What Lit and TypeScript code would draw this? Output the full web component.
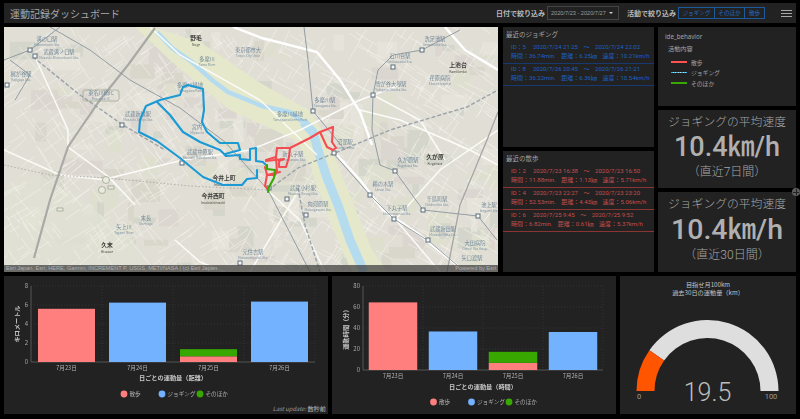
import { LitElement, html, css, svg } from 'lit';
import { customElement, property } from 'lit/decorators.js';

type Pt = [number, number];
const line = (pts: Pt[]) => pts.map((p) => p.join(',')).join(' ');

// small seeded generator, the street texture has to stay the same between runs
function rng(seed: number) {
  return () => {
    seed = (seed + 0x6d2b79f5) | 0;
    let t = Math.imul(seed ^ (seed >>> 15), 1 | seed);
    t = (t + Math.imul(t ^ (t >>> 7), 61 | t)) ^ t;
    return ((t ^ (t >>> 14)) >>> 0) / 4294967296;
  };
}

function streets(): string {
  const r = rng(42);
  let d = '';
  for (let i = 0; i < 820; i++) {
    const x = 4 + r() * 494;
    const y = 27 + r() * 245;
    const a = (x > 250 ? 0.55 : 0.95) + (r() > 0.5 ? Math.PI / 2 : 0) + (r() - 0.5) * 0.25;
    const l = 8 + r() * 24;
    d += `M${x.toFixed(1)} ${y.toFixed(1)}L${(x + Math.cos(a) * l).toFixed(1)} ${(y + Math.sin(a) * l).toFixed(1)}`;
  }
  return d;
}

function blotches() {
  const r = rng(7);
  const out: { x: number; y: number; w: number; h: number; c: string }[] = [];
  const cols = ['#d9d6cc', '#e6e3da', '#d4d5cb', '#dfdfcf', '#dcd6d0'];
  for (let i = 0; i < 170; i++) {
    out.push({
      x: 4 + r() * 490,
      y: 27 + r() * 240,
      w: 6 + r() * 24,
      h: 5 + r() * 18,
      c: cols[Math.floor(r() * cols.length)],
    });
  }
  return out;
}

const STATIONS: Pt[] = [
  [30, 50], [35, 56], [7, 85], [122, 125], [182, 163], [240, 263], [287, 199], [269, 188],
  [306, 215], [313, 111], [334, 153], [373, 95], [393, 67], [422, 50], [395, 171], [370, 195],
  [423, 210], [478, 216], [394, 219], [428, 240],
];

// name, romaji, x, y
const LABELS: [string, string, number, number][] = [
  ['溝の口駅', 'Mizonokuchi Sta.', 47, 39],
  ['武蔵溝ノ口駅', 'Musashi-Mizonokuchi Sta.', 59, 52],
  ['梶が谷駅', 'Kajigaya Sta.', 21, 74],
  ['武蔵新城駅', 'Musashi Shinjo Sta.', 138, 114],
  ['東京都市大', 'Tokyo City Univ.', 248, 50],
  ['多摩川', 'Tama River', 207, 59],
  ['多摩川緑地', 'Tamagawa Park', 190, 85],
  ['多摩川駅', 'Tamagawa Sta.', 325, 100],
  ['多摩川緑地', 'Tamagawa Green Park', 290, 114],
  ['宮内', 'Miyauchi', 197, 127],
  ['沼部駅', 'Numabe Sta.', 345, 142],
  ['石川台駅', 'Ishikawadai Sta.', 400, 56],
  ['雪が谷大塚駅', 'Yukigaya Otsuka Sta.', 391, 84],
  ['洗足池駅', 'Senzokuike Sta.', 435, 39],
  ['荏原病院', 'Ebara Hospital', 440, 78],
  ['鵜の木駅', 'Unoki Sta.', 383, 184],
  ['久が原駅', 'Kugahara Sta.', 408, 160],
  ['千鳥町駅', 'Chidoricho Sta.', 437, 199],
  ['池上駅', 'Ikegami Sta.', 489, 205],
  ['下丸子駅', 'Shimomaruko Sta.', 397, 208],
  ['武蔵新田駅', 'Musashi Nitta Sta.', 443, 229],
  ['大田病院', 'Omori Ota Hosp.', 475, 243],
  ['矢口渡駅', '', 472, 258],
  ['向河原駅', 'Mukaigawara Sta.', 318, 204],
  ['武蔵小杉駅', 'Musashi Kosugi Sta.', 303, 188],
  ['新丸子駅', 'Shinmaruko Sta.', 293, 154],
  ['元住吉駅', 'Motosumiyoshi Sta.', 253, 252],
  ['武蔵中原駅', 'Musashi Nakahara Sta.', 200, 152],
  ['末長', 'Suenaga', 146, 218],
  ['矢上川', 'Yagami River', 124, 227],
];

const PLACES: [string, string, number, number][] = [
  ['野毛', 'Noge', 196, 38],
  ['上池台', 'Kamiikedai', 458, 65],
  ['久が原', 'Kugahara', 435, 157],
  ['今井上町', 'Imaikamicho', 224, 178],
  ['今井西町', 'Imainishimachi', 213, 196],
  ['久末', 'Hisasue', 107, 245],
];

const BLUE_ROUTES: Pt[][] = [
  [[183, 87], [188, 85], [203, 89], [204, 110], [202, 122], [207, 132], [220, 143], [238, 143], [240, 150], [225, 154], [226, 156], [240, 155], [240, 159], [250, 160], [250, 149], [256, 148], [256, 161], [263, 162], [266, 165]],
  [[183, 87], [180, 95], [160, 100], [146, 106], [140, 120], [139, 132], [157, 141], [180, 158], [203, 177], [223, 185], [242, 185], [247, 179], [257, 178], [257, 170]],
  [[157, 102], [170, 115], [183, 132], [200, 142], [220, 150], [226, 156]],
];

const RED_ROUTES: Pt[][] = [
  [[333, 127], [320, 132], [310, 138], [290, 148], [277, 148], [276, 157], [266, 160]],
  [[320, 132], [327, 147], [333, 150], [336, 148], [332, 142], [333, 127]],
  [[290, 148], [289, 157], [286, 167], [279, 167], [279, 161], [284, 159], [266, 161]],
  [[276, 157], [277, 172], [275, 175], [267, 175], [265, 186], [268, 189]],
  [[265, 167], [267, 175], [280, 172]],
];

const GREEN_ROUTE: Pt[] = [[267, 165], [267, 169], [275, 170], [274, 178], [269, 187], [268, 192]];

@customElement('route-map')
class RouteMap extends LitElement {
  static styles = css`
    :host {
      display: block;
      position: relative;
      overflow: hidden;
      background: #e1ded5;
    }
    svg {
      display: block;
      width: 100%;
      height: 100%;
      filter: blur(0.3px);
      font-family: 'Noto Sans CJK JP', sans-serif;
    }
    .street { stroke: #f6f5f0; stroke-width: 0.6; fill: none; opacity: 0.9; }
    .main { stroke: #fbfbf8; stroke-width: 1.5; fill: none; }
    .wide { stroke: #ffffff; stroke-width: 2.4; fill: none; }
    .highway { stroke: #a9a9a6; stroke-width: 2.2; fill: none; }
    .expr { stroke: #a5a5a4; stroke-width: 1.3; fill: none; }
    .rail { stroke: #8a959c; stroke-width: 0.9; fill: none; }
    .dash { stroke: #9aa3a8; stroke-width: 1.4; stroke-dasharray: 4 2; fill: none; }
    .dot { stroke: #979c90; stroke-width: 0.7; stroke-dasharray: 1.5 2; fill: none; }
    .route { fill: none; stroke-width: 2.1; stroke-linejoin: round; stroke-linecap: round; }
    .st { fill: #f4f6f7; stroke: #5e6e7a; stroke-width: 1; }
    .ja { font-size: 5.2px; fill: #6f8799; text-anchor: middle; }
    .en { font-size: 3.3px; fill: #7d93a3; text-anchor: middle; }
    .pja { font-size: 5.8px; font-weight: 700; fill: #3c3c38; text-anchor: middle; }
    .pen { font-size: 3.4px; fill: #4a4a46; text-anchor: middle; }
    .ic { fill: #e9ebdc; stroke: #88917f; stroke-width: 0.6; }
    .attr {
      position: absolute;
      left: 0;
      right: 0;
      bottom: 0;
      height: 7px;
      padding: 0 2px;
      display: flex;
      justify-content: space-between;
      align-items: center;
      background: rgba(60, 60, 60, 0.72);
      color: #aeaeae;
      font: 5.6px/7px 'Liberation Sans', sans-serif;
      white-space: nowrap;
    }
  `;

  render() {
    return html`
      <svg viewBox="4 27 494 245" preserveAspectRatio="none">
        ${blotches().map(
          (b) => svg`<rect x=${b.x} y=${b.y} width=${b.w} height=${b.h} fill=${b.c} />`,
        )}
        <path d="M4 190 L40 175 L80 200 L130 235 L150 272 L4 272 Z" fill="#e0e3d3" opacity="0.7" />
        <path d=${streets()} class="street" />
        <polygon
          fill="#e5e8cb"
          points="135,27 152,27 200,42 262,84 312,112 332,150 350,195 372,250 388,272 352,272 330,222 310,165 296,140 230,110 172,62"
        />
        <polyline
          fill="none"
          stroke="#b5dbef"
          stroke-width="4.5"
          points="157,32 172,48 192,62 212,80 228,92 262,106 290,112 303,122"
        />
        <polyline
          fill="none"
          stroke="#b5dbef"
          stroke-width="9"
          stroke-linejoin="round"
          points="303,122 313,132 318,150 327,178 338,205 350,240 364,272"
        />
        <g>
          <polyline class="wide" points="233,27 262,38 317,52 340,80 360,112 372,145" />
          <polyline class="wide" points="337,155 360,180 383,210 420,235 465,272" />
          <polyline class="wide" points="498,70 465,50 445,27" />
          <polyline class="main" points="35,57 50,90 68,130 68,147 110,178 135,205" />
          <polyline class="main" points="110,178 183,160 250,150 300,130 360,100 400,85" />
          <polyline class="main" points="4,150 60,175 107,180" />
          <polyline class="main" points="175,240 200,262 225,272" />
          <polyline class="main" points="300,188 250,272" />
          <polyline class="main" points="267,190 300,220 325,272" />
          <polyline class="main" points="150,27 180,55 260,100 317,155" />
          <polyline class="main" points="396,220 440,272" />
          <polyline class="main" points="498,130 440,170 395,220" />
          <polyline class="main" points="360,110 400,120 470,150 498,165" />
          <polyline class="main" points="373,95 420,120 445,160" />
        </g>
        <polyline class="highway" points="155,28 128,65 100,100 78,132 68,147 50,200 34,258" />
        <polyline class="expr" points="498,112 487,140 460,205 447,272" />
        <polyline class="rail" points="304,27 308,60 313,111 345,150" />
        <polyline class="rail" points="4,60 30,50 60,27" />
        <polyline class="rail" points="50,27 90,50 130,80 180,108 225,142 268,190 310,272" />
        <polyline class="rail" points="333,153 370,195 394,219 430,242 465,272" />
        <polyline class="rail" points="373,95 378,70 393,55 422,50 460,30" />
        <polyline class="rail" points="373,95 372,130 380,165 395,171 423,210 478,216 497,240" />
        <polyline class="rail" points="10,60 30,75 15,100" />
        <polyline class="dash" points="33,57 80,95 123,125 165,150" />
        <polyline class="dash" points="268,190 298,168 335,153 390,130 467,107 498,90" />
        <polyline class="dash" points="298,188 305,225 320,272" />
        <polyline class="dot" points="4,165 50,175 107,178 190,186 268,190" />
        <rect x="83" y="90" width="36" height="11" rx="2" fill="none" stroke="#8c9a82" stroke-width="0.6" />
        <text class="ja" x="101" y="94.5">東名川崎IC</text>
        <text class="en" x="101" y="99.5">Kawasaki IC</text>
        <circle class="ic" cx="106" cy="180" r="3.5" />
        <circle class="ic" cx="102" cy="190" r="3.5" />
        <rect class="ic" x="108" y="186" width="6" height="3" />
        <rect class="ic" x="57" y="208" width="6" height="3" />
        ${STATIONS.map(
          ([x, y]) => svg`<rect class="st" x=${x - 2} y=${y - 2} width="4" height="4" />`,
        )}
        ${LABELS.map(
          ([ja, en, x, y]) => svg`
            <text class="ja" x=${x} y=${y + 2}>${ja}</text>
            ${en ? svg`<text class="en" x=${x} y=${y + 7}>${en}</text>` : ''}
          `,
        )}
        ${PLACES.map(
          ([ja, en, x, y]) => svg`
            <text class="pja" x=${x} y=${y + 2}>${ja}</text>
            <text class="pen" x=${x} y=${y + 7.5}>${en}</text>
          `,
        )}
        ${BLUE_ROUTES.map(
          (r) => svg`<polyline class="route" stroke="#1c9ad6" points=${line(r)} />`,
        )}
        ${RED_ROUTES.map(
          (r) => svg`<polyline class="route" stroke="#f24d52" points=${line(r)} />`,
        )}
        <polyline class="route" stroke="#38a800" points=${line(GREEN_ROUTE)} />
      </svg>
      <div class="attr">
        <span>Esri Japan, Esri, HERE, Garmin, INCREMENT P, USGS, METI/NASA | (c) Esri Japan</span>
        <span>Powered by Esri</span>
      </div>
    `;
  }
}

interface Segment { value: number; color: string; }
interface Day { label: string; segments: Segment[]; }
interface ChartBox {
  w: number; l: number; r: number; t: number; b: number;
  yTitleX: number; bar: number; titleY: number; legendY: number; legendX: number[];
}

const PINK = '#ff7f7f';
const SKY = '#73b2ff';
const LEAF = '#38a800';

@customElement('bar-chart')
class BarChart extends LitElement {
  @property({ type: Array }) days: Day[] = [];
  @property({ type: Array }) ticks: number[] = [];
  @property() title = '';
  @property() yTitle = '';
  // all in px of the panel
  @property({ type: Object }) box: ChartBox = { w: 300, l: 0, r: 0, t: 0, b: 0, yTitleX: 0, bar: 0, titleY: 0, legendY: 0, legendX: [0, 0, 0] };

  static styles = css`
    :host { display: block; }
    svg {
      display: block;
      width: 100%;
      height: 100%;
      font-family: 'Noto Sans CJK JP', sans-serif;
      filter: blur(0.2px);
    }
    .grid { stroke: #3a3a3a; stroke-width: 0.7; stroke-dasharray: 1.2 1.8; }
    .axis { stroke: #555; stroke-width: 1; }
    .tick { font-size: 6px; fill: #a8a8a8; text-anchor: end; }
    .cat { font-size: 5.6px; fill: #b4b4b4; text-anchor: middle; }
    .ttl { font-size: 6.2px; font-weight: 700; fill: #c8c8c8; text-anchor: middle; }
    .leg { font-size: 5.6px; fill: #b0b0b0; }
  `;

  render() {
    const { w, l, r, t, b, yTitleX, bar, titleY, legendY, legendX } = this.box;
    const max = this.ticks[this.ticks.length - 1];
    const y = (v: number) => b - (v / max) * (b - t);
    const step = (r - l) / this.days.length;
    const legend = [
      { name: '散歩', color: PINK },
      { name: 'ジョギング', color: SKY },
      { name: 'そのほか', color: LEAF },
    ];
    return html`
      <svg viewBox="0 0 ${w} 138">
        ${this.ticks.map(
          (v) => svg`
            <line class=${v === 0 ? 'axis' : 'grid'} x1=${l} x2=${r} y1=${y(v)} y2=${y(v)} />
            <text class="tick" x=${l - 3} y=${y(v) + 2}>${v}</text>
          `,
        )}
        ${this.days.map((_, i) => svg`<line class="grid" x1=${l + step * (i + 1)} x2=${l + step * (i + 1)} y1=${t} y2=${b} />`)}
        <line class="axis" x1=${l} x2=${l} y1=${t} y2=${b} />
        ${this.days.map((d, i) => {
          const cx = l + step * (i + 0.5);
          let base = 0;
          return svg`
            ${d.segments.map((s) => {
              const top = y(base + s.value);
              const h = y(base) - top;
              base += s.value;
              return svg`<rect x=${cx - bar / 2} y=${top} width=${bar} height=${h} fill=${s.color} />`;
            })}
            <text class="cat" x=${cx} y=${b + 8}>${d.label}</text>
          `;
        })}
        <text class="ttl" x=${(l + r) / 2} y=${titleY}>${this.title}</text>
        <text
          class="ttl"
          transform="translate(${yTitleX} ${(t + b) / 2}) rotate(-90)"
          x="0"
          y="0"
        >${this.yTitle}</text>
        ${legend.map(
          (e, i) => svg`
            <circle cx=${legendX[i]} cy=${legendY} r="3.4" fill=${e.color} />
            <text class="leg" x=${legendX[i] + 5.5} y=${legendY + 2}>${e.name}</text>
          `,
        )}
      </svg>
    `;
  }
}

@customElement('goal-gauge')
class GoalGauge extends LitElement {
  @property({ type: Number }) value = 0;
  @property({ type: Number }) max = 100;

  static styles = css`
    :host { display: block; text-align: center; color: #c4c4c4; position: relative; }
    .head {
      padding-top: 5px;
      font: 6.2px/8px 'Noto Sans CJK JP', sans-serif;
      color: #c4c4c4;
    }
    svg { display: block; position: absolute; left: 0; top: 0; width: 100%; height: 100%; font-family: Roboto, sans-serif; }
    .val { font-size: 25px; font-weight: 300; fill: #bdbdbd; text-anchor: middle; }
    .end { font-size: 7.5px; fill: #9c9c9c; text-anchor: middle; }
  `;

  private arc(cx: number, cy: number, ro: number, ri: number, from: number, to: number) {
    const p = (r: number, f: number) => {
      const a = Math.PI * (1 - f);
      return `${(cx + r * Math.cos(a)).toFixed(2)} ${(cy - r * Math.sin(a)).toFixed(2)}`;
    };
    return `M${p(ro, from)}A${ro} ${ro} 0 0 1 ${p(ro, to)}L${p(ri, to)}A${ri} ${ri} 0 0 0 ${p(ri, from)}Z`;
  }

  render() {
    const f = this.value / this.max;
    const cx = 87.5;
    const cy = 115;
    return html`
      <svg viewBox="0 0 176 138">
        <path d=${this.arc(cx, cy, 71, 53, f, 1)} fill="#dedede" />
        <path d=${this.arc(cx, cy, 71, 53, 0, f)} fill="#ff5500" />
        <text class="val" x=${cx} y="125">${this.value}</text>
        <text class="end" x="19" y="123">0</text>
        <text class="end" x="151" y="123">${this.max}</text>
      </svg>
      <div class="head">目指せ月100km<br />過去30日の運動量（km）</div>
    `;
  }
}

interface Activity { id: number; start: string; end: string; time: string; dist: string; speed: string; }

const JOGS: Activity[] = [
  { id: 5, start: '2020/7/24 21:25', end: '2020/7/24 22:02', time: '36.74', dist: '6.25', speed: '10.21' },
  { id: 8, start: '2020/7/26 20:45', end: '2020/7/26 21:21', time: '36.22', dist: '6.36', speed: '10.54' },
];
const WALKS: Activity[] = [
  { id: 2, start: '2020/7/23 16:38', end: '2020/7/23 16:50', time: '11.88', dist: '1.13', speed: '5.71' },
  { id: 4, start: '2020/7/23 22:27', end: '2020/7/23 23:20', time: '52.53', dist: '4.43', speed: '5.06' },
  { id: 6, start: '2020/7/25 9:45', end: '2020/7/25 9:52', time: '6.82', dist: '0.61', speed: '5.37' },
];

const CHART_DAYS = ['7月23日', '7月24日', '7月25日', '7月26日'];

@customElement('app-root')
export class AppRoot extends LitElement {
  static styles = css`
    :host {
      display: block;
      width: 800px;
      height: 419px;
      box-sizing: border-box;
      padding: 3px 4px 5px;
      background: #000;
      font-family: 'Noto Sans CJK JP', 'Noto Sans', sans-serif;
      overflow: hidden;
      position: relative;
    }
    .page {
      display: grid;
      grid-template-rows: 20px 245px 138px;
      row-gap: 4px;
    }
    .panel { background: #222; min-width: 0; }
    .topbar {
      background: #222;
      display: flex;
      align-items: center;
      padding: 0 4px 0 6px;
      color: #c6c6c6;
    }
    .brand { font-size: 10px; color: #a9a9a9; margin-right: auto; }
    .flabel { font-size: 7px; font-weight: 700; color: #bcbcbc; white-space: nowrap; }
    .date {
      box-sizing: border-box;
      width: 72px;
      height: 14px;
      margin: 0 8px 0 2px;
      border: 1px solid #444;
      padding-left: 3px;
      display: flex;
      align-items: center;
      gap: 3px;
      font: 5.6px 'Liberation Sans', sans-serif;
      color: #9d9d9d;
      white-space: nowrap;
    }
    .caret {
      width: 0;
      height: 0;
      border-left: 2.5px solid transparent;
      border-right: 2.5px solid transparent;
      border-top: 2.5px solid #cfcfcf;
    }
    .seg { display: flex; margin-left: 3px; margin-right: 16px; }
    .seg span {
      box-sizing: border-box;
      height: 12px;
      border: 1px solid #1c5a9e;
      margin-left: -1px;
      color: #2268c0;
      font-size: 5.6px;
      line-height: 10px;
      white-space: nowrap;
      text-align: center;
    }
    .seg .w36 { width: 37px; }
    .seg .w30 { width: 31px; }
    .seg .w20 { width: 21px; }
    .burger { display: flex; flex-direction: column; gap: 2px; width: 11px; }
    .burger i { display: block; height: 1px; background: #a8a8a8; }
    .mid {
      display: grid;
      grid-template-columns: 494px 152px 138px;
      column-gap: 4px;
    }
    .stack { display: grid; row-gap: 4px; min-height: 0; }
    .lists { grid-template-rows: 120px 121px; margin-left: 1px; }
    .side { grid-template-rows: 79px 78px 80px; position: relative; }
    .list-title { font-size: 6.5px; color: #a6a6a6; padding: 3px 0 0 3px; line-height: 9px; }
    .list {
      padding-top: 4px;
      font-family: Roboto, 'Noto Sans CJK JP', sans-serif;
      font-size: 6px;
      line-height: 8.5px;
      white-space: nowrap;
    }
    .row { padding: 0 0 2.5px 8px; margin-bottom: 1.5px; border-bottom: 1px solid; }
    .row div { display: flex; gap: 5.5px; }
    .row .id { width: 16.5px; }
    .jog { color: #1c60c4; }
    .jog .row { border-color: #17396f; }
    .walk { color: #c24f4f; }
    .walk .row { border-color: #8a3434; }
    .legend { padding: 6px 0 0 7px; font-size: 6.2px; color: #a4a4a4; }
    .legend .lid { font-family: 'Noto Sans', sans-serif; line-height: 8px; }
    .legend .lhead { margin: 4px 0 5px 3px; line-height: 8px; }
    .legend ul { list-style: none; margin: 0; padding: 0 0 0 6px; display: grid; row-gap: 2.6px; font-size: 5.8px; }
    .legend li { display: flex; align-items: center; gap: 4px; height: 8px; }
    .swatch { display: block; width: 16px; height: 1.5px; }
    .swatch.walk-line { background: #ff5050; }
    .swatch.jog-line {
      background: repeating-linear-gradient(90deg, #35a8e0 0 1.5px, #bfe4f7 1.5px 2.5px);
    }
    .swatch.other-line { background: #38a800; }
    .stat {
      display: flex;
      flex-direction: column;
      align-items: center;
      color: #a6a6a6;
      white-space: nowrap;
      font-family: Roboto, 'Noto Sans CJK JP', sans-serif;
    }
    .stat .t { font-size: 11.8px; font-weight: 300; line-height: 16px; margin-top: 4px; }
    .stat .v { font-size: 28.5px; font-weight: 500; line-height: 32px; margin-top: 2px; color: #b0b0b0; }
    .stat .s { font-size: 12px; font-weight: 300; line-height: 16px; margin-top: 1px; }
    .stat.first .v { font-size: 27px; line-height: 30px; }
    .stat.first .s { margin-top: 2px; }
    .grip {
      position: absolute;
      right: -4px;
      top: 161px;
      width: 8px;
      height: 8px;
      border-radius: 50%;
      background: #5d5d5d;
    }
    .grip::before,
    .grip::after { content: ''; position: absolute; background: #222; }
    .grip::before { left: 3.5px; top: 1px; width: 1px; height: 6px; }
    .grip::after { left: 1px; top: 3.5px; width: 6px; height: 1px; }
    .bottom {
      display: grid;
      grid-template-columns: 324px 284px 176px;
      column-gap: 4px;
      height: 138px;
    }
    .chart { position: relative; }
    bar-chart, goal-gauge { width: 100%; height: 138px; }
    .updated {
      position: absolute;
      right: 2px;
      bottom: 1px;
      font-size: 5.8px;
      line-height: 8px;
      font-style: italic;
      color: #9a9a9a;
    }
    .updated b { font-style: normal; font-weight: 400; color: #b8b8b8; font-size: 6.2px; }
  `;

  private renderRows(rows: Activity[]) {
    return rows.map(
      (r) => html`
        <div class="row">
          <div>
            <span class="id">ID：${r.id}</span><span>${r.start}</span><span>～</span><span>${r.end}</span>
          </div>
          <div>
            <span>時間：${r.time}min.</span><span>距離：${r.dist}㎞</span><span>速度：${r.speed}km/h</span>
          </div>
        </div>
      `,
    );
  }

  private renderStat(period: string, cls = '') {
    return html`
      <div class="panel stat ${cls}">
        <div class="t">ジョギングの平均速度</div>
        <div class="v">10.4㎞/h</div>
        <div class="s">（直近${period}日間）</div>
      </div>
    `;
  }

  render() {
    const km: Day[] = [
      { label: CHART_DAYS[0], segments: [{ value: 5.6, color: PINK }] },
      { label: CHART_DAYS[1], segments: [{ value: 6.25, color: SKY }] },
      { label: CHART_DAYS[2], segments: [{ value: 0.6, color: PINK }, { value: 0.75, color: LEAF }] },
      { label: CHART_DAYS[3], segments: [{ value: 6.36, color: SKY }] },
    ];
    const min: Day[] = [
      { label: CHART_DAYS[0], segments: [{ value: 64.4, color: PINK }] },
      { label: CHART_DAYS[1], segments: [{ value: 36.7, color: SKY }] },
      { label: CHART_DAYS[2], segments: [{ value: 6.8, color: PINK }, { value: 10.5, color: LEAF }] },
      { label: CHART_DAYS[3], segments: [{ value: 36.2, color: SKY }] },
    ];
    return html`
      <div class="page">
        <header class="topbar">
          <div class="brand">運動記録ダッシュボード</div>
          <span class="flabel">日付で絞り込み</span>
          <div class="date">2020/7/23 - 2020/7/27 <i class="caret"></i></div>
          <span class="flabel">活動で絞り込み</span>
          <div class="seg">
            <span class="w36">ジョギング</span><span class="w30">そのほか</span><span class="w20">散歩</span>
          </div>
          <div class="burger"><i></i><i></i><i></i></div>
        </header>
        <div class="mid">
          <route-map></route-map>
          <div class="stack lists">
            <section class="panel">
              <div class="list-title">最近のジョギング</div>
              <div class="list jog">${this.renderRows(JOGS)}</div>
            </section>
            <section class="panel">
              <div class="list-title">最近の散歩</div>
              <div class="list walk">${this.renderRows(WALKS)}</div>
            </section>
          </div>
          <div class="stack side">
            <section class="panel legend">
              <div class="lid">ide_behavior</div>
              <div class="lhead">活動内容</div>
              <ul>
                <li><i class="swatch walk-line"></i>散歩</li>
                <li><i class="swatch jog-line"></i>ジョギング</li>
                <li><i class="swatch other-line"></i>そのほか</li>
              </ul>
            </section>
            ${this.renderStat('7', 'first')} ${this.renderStat('30')}
            <i class="grip"></i>
          </div>
        </div>
        <div class="bottom">
          <section class="panel chart">
            <bar-chart
              .days=${km}
              .ticks=${[0, 2, 4, 6, 8]}
              title="日ごとの運動量（距離）"
              yTitle="キロメートル"
              .box=${{ w: 324, l: 27, r: 311, t: 10, b: 86, yTitleX: 15, bar: 57, titleY: 104, legendY: 118, legendX: [120, 158, 196] }}
            ></bar-chart>
            <div class="updated">Last update: <b>数秒前</b></div>
          </section>
          <section class="panel">
            <bar-chart
              .days=${min}
              .ticks=${[0, 20, 40, 60, 80]}
              title="日ごとの運動量（時間）"
              yTitle="運動時間（分）"
              .box=${{ w: 284, l: 31, r: 271, t: 10, b: 94, yTitleX: 16, bar: 48.5, titleY: 113, legendY: 126, legendX: [101.5, 139.5, 177] }}
            ></bar-chart>
          </section>
          <section class="panel">
            <goal-gauge .value=${19.5} .max=${100}></goal-gauge>
          </section>
        </div>
      </div>
    `;
  }
}
